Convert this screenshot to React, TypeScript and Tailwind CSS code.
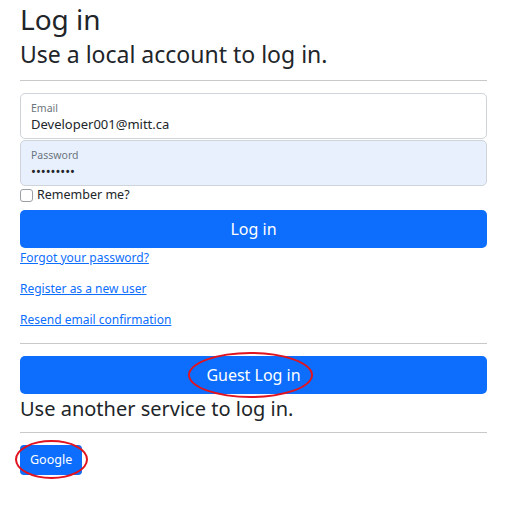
import { useState } from 'react';

const Login = () => {
  const [email, setEmail] = useState('Developer001@mitt.ca');
  const [password, setPassword] = useState('*********');
  const [remember, setRemember] = useState(false);

  return (
    <div className="min-h-screen bg-white text-[#212529] font-['Noto_Sans',sans-serif]">
      <div className="w-[467px] ml-[20px]">
        <h1 className="text-[28px] leading-[38px] font-normal">Log in</h1>
        <h2 className="mt-[1px] text-[23px] leading-[31px] font-normal">Use a local account to log in.</h2>
        <hr className="mt-[10px] border-t border-[#c8c9ca]" />

        <form onSubmit={(e) => e.preventDefault()} className="mt-[12px]">
          {/* Email */}
          <div className="h-[46px] rounded-[5px] border border-[#ced4da] bg-white px-[10px] pt-[7px]">
            <label className="block text-[10.5px] leading-[14px] text-[#6c757d]">Email</label>
            <input
              className="block w-full bg-transparent text-[13px] leading-[19px] outline-none"
              value={email}
              onChange={(e) => setEmail(e.target.value)}
            />
          </div>

          {/* Password */}
          <div className="mt-[1px] h-[46px] rounded-[5px] border border-[#ced4da] bg-[#e8f0fe] px-[10px] pt-[7px]">
            <label className="block text-[10.5px] leading-[14px] text-[#6c757d]">Password</label>
            <input
              type="password"
              className="block w-full bg-transparent text-[13px] leading-[19px] outline-none"
              value={password}
              onChange={(e) => setPassword(e.target.value)}
            />
          </div>

          <label className="mt-[2px] flex items-center gap-[4px] text-[12.5px] leading-[14px]">
            <input
              type="checkbox"
              checked={remember}
              onChange={(e) => setRemember(e.target.checked)}
              className="m-0 h-[13px] w-[13px] appearance-none rounded-[3px] border border-[#9aa0a6] bg-white"
            />
            Remember me?
          </label>

          <button
            type="submit"
            className="mt-[8px] h-[38px] w-full rounded-[5px] bg-[#0d6efd] text-[16px] text-white"
          >
            Log in
          </button>

          <div className="text-[12px] leading-[16px]">
            <p className="mt-[2px]"><a href="#" className="text-[#0d6efd] underline">Forgot your password?</a></p>
            <p className="mt-[15px]"><a href="#" className="text-[#0d6efd] underline">Register as a new user</a></p>
            <p className="mt-[15px]"><a href="#" className="text-[#0d6efd] underline">Resend email confirmation</a></p>
          </div>
        </form>

        <hr className="mt-[15px] border-t border-[#c8c9ca]" />

        <div className="relative mt-[12px]">
          <button className="h-[38px] w-full rounded-[5px] bg-[#0d6efd] text-[16px] text-white">Guest Log in</button>
          <span className="pointer-events-none absolute left-[168px] top-[-4px] h-[46px] w-[125px] rounded-[50%] border-2 border-[#e0131f]" />
        </div>

        <h3 className="mt-[2px] text-[20px] leading-[26px] font-normal">Use another service to log in.</h3>
        <hr className="mt-[10px] border-t border-[#c8c9ca]" />

        <div className="relative mt-[12px] inline-block">
          <button className="h-[30px] rounded-[4px] bg-[#0d6efd] px-[10px] text-[12.5px] text-white">Google</button>
          <span className="pointer-events-none absolute left-[-5px] top-[-5px] h-[39px] w-[73px] rounded-[50%] border-2 border-[#e0131f]" />
        </div>
      </div>
    </div>
  );
};

export default Login;
